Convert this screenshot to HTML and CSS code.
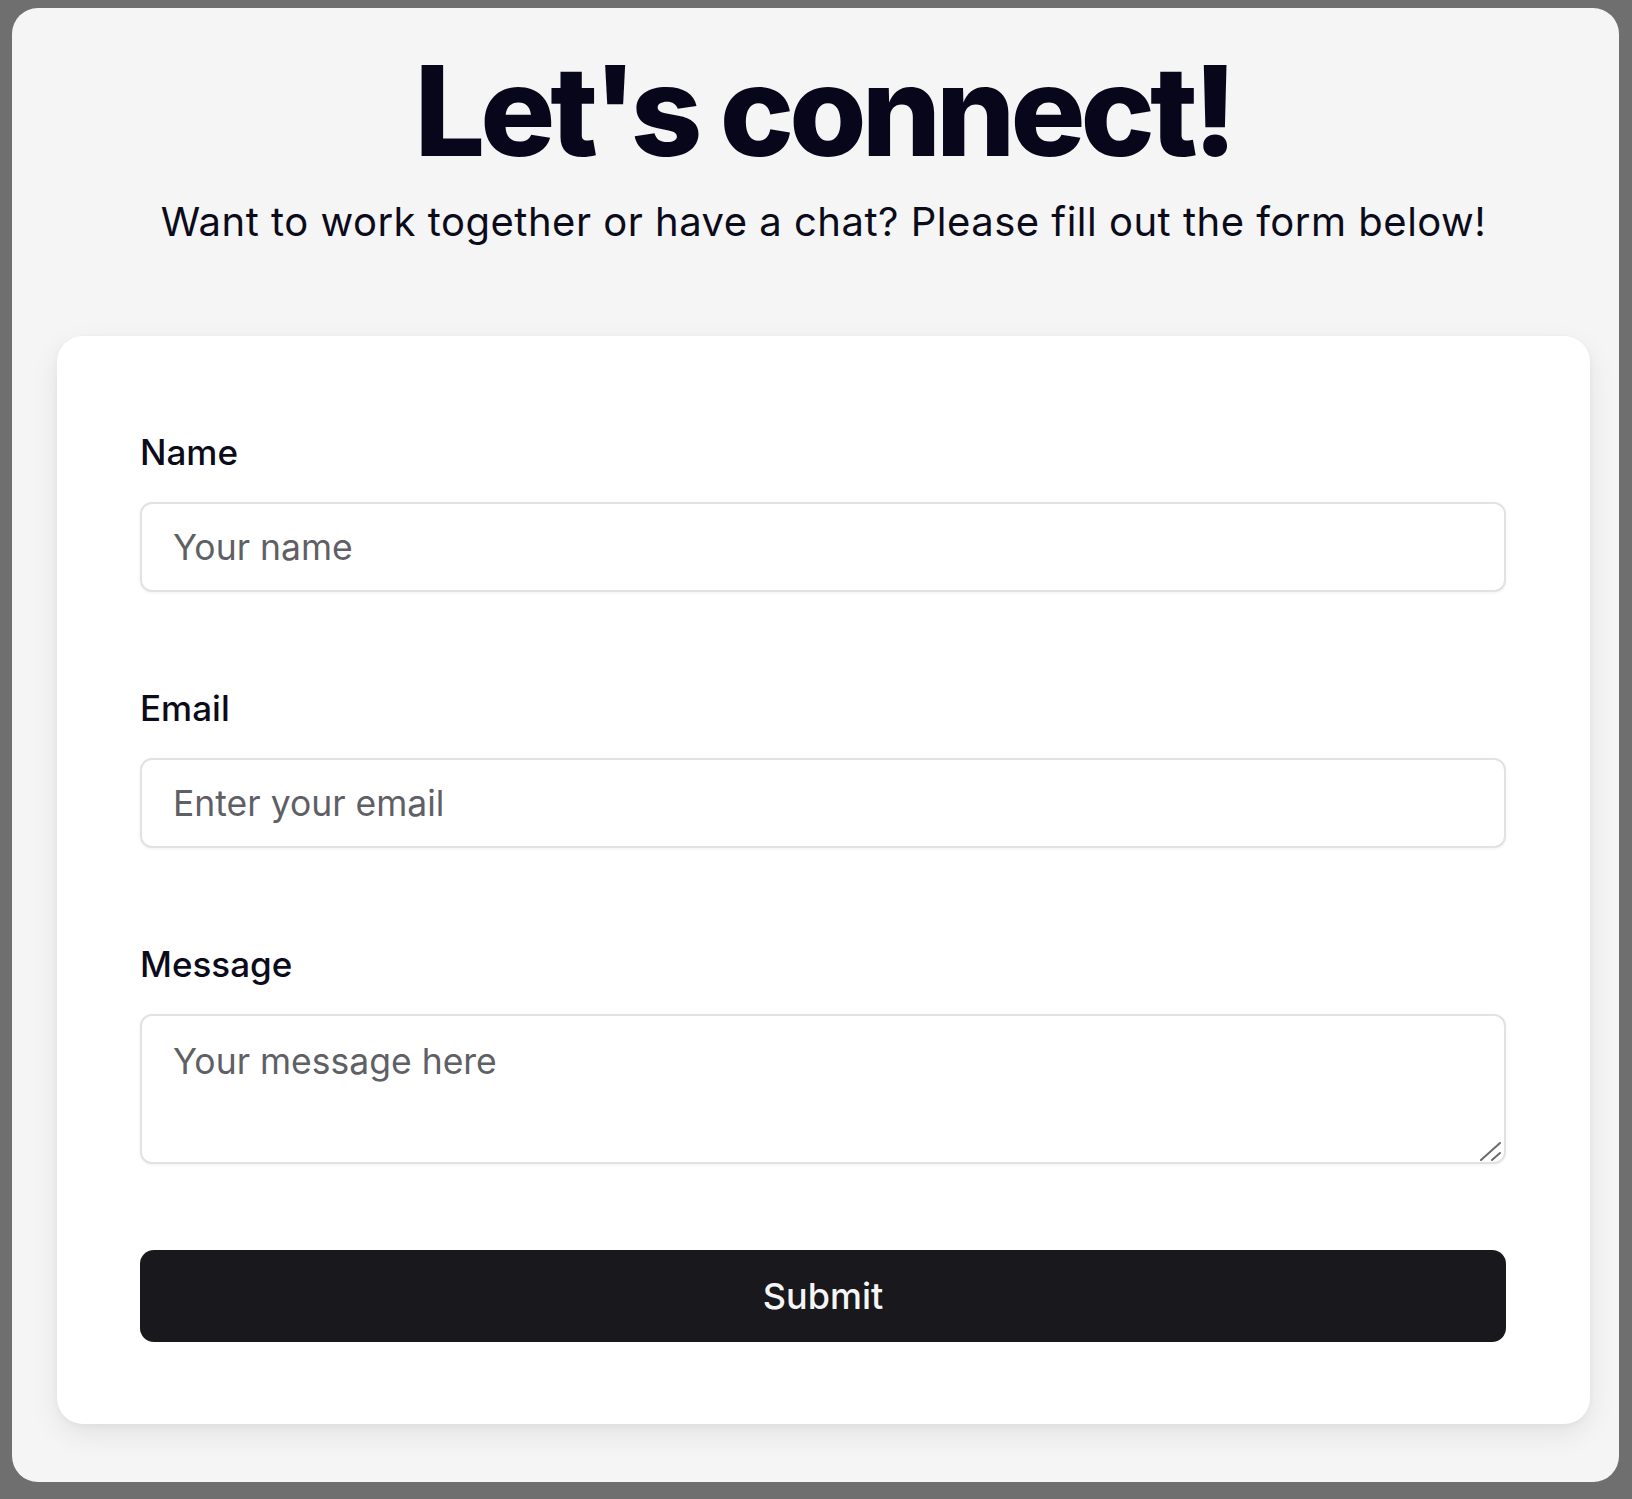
FILE: index.html
```html
<!DOCTYPE html>
<html lang="en">
<head>
<meta charset="utf-8">
<title>Let's connect!</title>
<link rel="stylesheet" href="styles.css">
</head>
<body>
<div class="frame">
  <main class="panel">
    <header class="intro">
      <h1 class="title">Let's connect!</h1>
      <p class="subtitle">Want to work together or have a chat? Please fill out the form below!</p>
    </header>
    <form class="card">
      <div class="field">
        <label class="label" for="name">Name</label>
        <input class="input" id="name" type="text" placeholder="Your name">
      </div>
      <div class="field">
        <label class="label" for="email">Email</label>
        <input class="input" id="email" type="email" placeholder="Enter your email">
      </div>
      <div class="field">
        <label class="label" for="message">Message</label>
        <div class="textarea-wrap">
          <textarea class="textarea" id="message" placeholder="Your message here"></textarea>
          <svg class="grip" width="22" height="20" viewBox="0 0 22 20" aria-hidden="true">
            <line x1="1" y1="19" x2="20" y2="2" />
            <line x1="12" y1="19" x2="20" y2="12" />
          </svg>
        </div>
      </div>
      <button class="submit" type="button">Submit</button>
    </form>
  </main>
</div>
</body>
</html>
```

FILE: styles.css
```css
* { box-sizing: border-box; }

html, body {
  margin: 0;
  padding: 0;
}

body {
  background: #6f6f6f;
  font-family: Inter, "Noto Sans", "Liberation Sans", sans-serif;
  width: 1632px;
  height: 1499px;
  overflow: hidden;
}

.frame {
  padding: 8px 13px 17px 12px;
  height: 1499px;
}

.panel {
  background: #f5f5f5;
  border-radius: 26px;
  height: 100%;
  padding: 40px 29px 0 45px;
  display: flex;
  flex-direction: column;
  align-items: center;
}

.intro {
  width: 1533px;
  text-align: center;
}

.title {
  margin: 0;
  font-size: 125px;
  line-height: 1;
  font-weight: 800;
  letter-spacing: -0.04em;
  color: #08061a;
}

.subtitle {
  margin: 20px 0 0;
  font-size: 40px;
  line-height: 58px;
  font-weight: 400;
  letter-spacing: 0.5px;
  color: #0b0b1a;
}

.card {
  margin-top: 85px;
  width: 1533px;
  background: #ffffff;
  border-radius: 26px;
  box-shadow: 0 10px 28px rgba(0, 0, 0, 0.08), 0 2px 6px rgba(0, 0, 0, 0.04);
  padding: 90px 84px 82px 83px;
  display: flex;
  flex-direction: column;
  gap: 90px;
}

.field {
  display: flex;
  flex-direction: column;
  gap: 24px;
}

.label {
  font-size: 35px;
  line-height: 52px;
  font-weight: 500;
  color: #0b0b1a;
}

.input,
.textarea {
  width: 100%;
  border: 2px solid #e2e2e4;
  border-radius: 12px;
  background: #ffffff;
  box-shadow: 0 1px 3px rgba(0, 0, 0, 0.06);
  font-family: Inter, "Noto Sans", "Liberation Sans", sans-serif;
  font-size: 35.5px;
  color: #0b0b1a;
  outline: none;
}

.input {
  height: 90px;
  padding: 0 31px;
}

.textarea-wrap {
  position: relative;
  height: 150px;
}

.textarea {
  display: block;
  height: 150px;
  padding: 19px 31px;
  line-height: 1.5;
  resize: none;
}

.grip {
  position: absolute;
  right: 4px;
  bottom: 3px;
  stroke: #6b6b6b;
  stroke-width: 2;
  stroke-linecap: round;
}

.input::placeholder,
.textarea::placeholder {
  color: #5f5f66;
  opacity: 1;
}

.submit {
  margin-top: -4px;
  height: 92px;
  width: 100%;
  border: none;
  border-radius: 14px;
  background: #18181d;
  color: #f5f5f5;
  font-family: Inter, "Noto Sans", "Liberation Sans", sans-serif;
  font-size: 36px;
  font-weight: 500;
  cursor: pointer;
}
```
